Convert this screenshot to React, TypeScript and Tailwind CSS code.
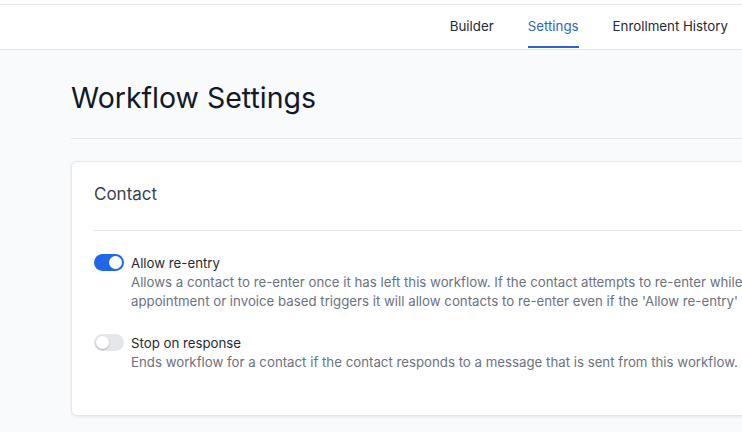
import React from 'react';

type ToggleRowProps = {
  on: boolean;
  title: string;
  lines: React.ReactNode[];
};

function Toggle({ on }: { on: boolean }) {
  return (
    <div
      className={
        on
          ? 'relative h-[17px] w-[30px] shrink-0 rounded-full bg-[#1f66ea]'
          : 'relative h-[17px] w-[30px] shrink-0 rounded-full bg-[#e5e7eb]'
      }
    >
      <div
        className={
          on
            ? 'absolute right-[2px] top-[2px] h-[13px] w-[13px] rounded-full bg-white'
            : 'absolute left-[2px] top-[2px] h-[13px] w-[13px] rounded-full bg-white shadow-[0_1px_2px_rgba(0,0,0,0.25)]'
        }
      />
    </div>
  );
}

function ToggleRow({ on, title, lines }: ToggleRowProps) {
  return (
    <div className="flex gap-[7px]">
      <div className="pt-[1px]">
        <Toggle on={on} />
      </div>
      <div>
        <div className="text-[13.25px] leading-[20px] text-[#1f2937]">{title}</div>
        <div className="text-[13.25px] leading-[19px] text-[#6b7280]">
          {lines.map((l, i) => (
            <div key={i} className="whitespace-nowrap">
              {l}
            </div>
          ))}
        </div>
      </div>
    </div>
  );
}

export default function App() {
  return (
    <div
      className="h-[432px] w-[742px] overflow-hidden bg-[#f8fafc]"
      style={{ fontFamily: 'Inter, "Noto Sans", sans-serif' }}
    >
      {/* Top header */}
      <div className="h-[4px] bg-white" />
      <header className="flex h-[46px] items-stretch justify-end border-y border-[#e5e7eb] bg-white pr-[14px]">
        <nav className="flex gap-[34px] text-[13.3px]">
          <a className="flex items-center text-[#1f2937]">Builder</a>
          <a className="relative flex items-center text-[#2f64d0]">
            Settings
            <span className="absolute bottom-[1px] left-0 right-0 h-[2px] bg-[#2f64d0]" />
          </a>
          <a className="flex items-center text-[#1f2937]">Enrollment History</a>
        </nav>
      </header>

      {/* Body */}
      <main className="pl-[71px]">
        <h1 className="pt-[30px] text-[28.5px] leading-[36px] text-[#111827]">Workflow Settings</h1>
        <div className="mt-[22px] w-[900px] border-t border-[#e5e7eb]" />

        <section className="mt-[22px] w-[900px] rounded-[6px] border border-[#e5e7eb] bg-white shadow-[0_1px_3px_rgba(0,0,0,0.08)]">
          <div className="px-[22px]">
            <h2 className="pb-[26px] pt-[22px] text-[17px] leading-[20px] text-[#374151]">Contact</h2>
            <div className="border-t border-[#e5e7eb]" />
          </div>
          <div className="flex flex-col gap-[22px] px-[22px] pb-[43px] pt-[22px]">
            <ToggleRow
              on={true}
              title="Allow re-entry"
              lines={[
                'Allows a contact to re-enter once it has left this workflow. If the contact attempts to re-enter while they are still active, they will not be re-entered. For',
                "appointment or invoice based triggers it will allow contacts to re-enter even if the 'Allow re-entry' setting is turned off.",
              ]}
            />
            <ToggleRow
              on={false}
              title="Stop on response"
              lines={[
                <>
                  Ends workflow for a contact if the contact responds to a message that is sent from this workflow.{' '}
                  <span className="text-[#2f64d0]">Know more</span>
                </>,
              ]}
            />
          </div>
        </section>
      </main>
    </div>
  );
}
